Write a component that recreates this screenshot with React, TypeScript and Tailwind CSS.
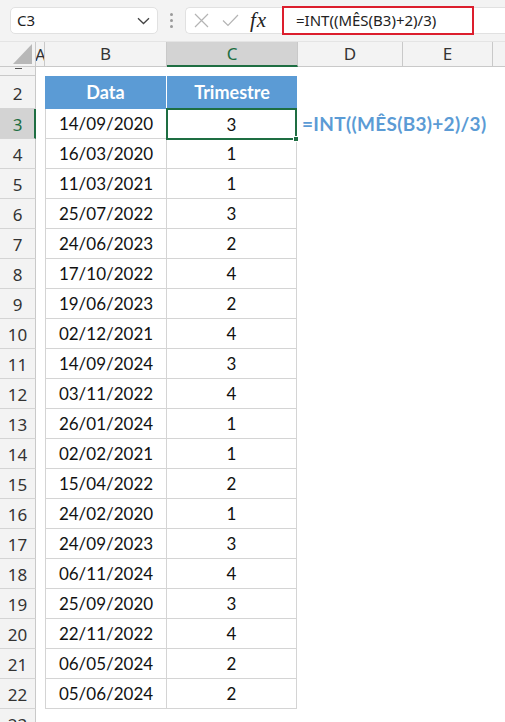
import React from "react";

const DATA: [string, number][] = [
  ["14/09/2020", 3],
  ["16/03/2020", 1],
  ["11/03/2021", 1],
  ["25/07/2022", 3],
  ["24/06/2023", 2],
  ["17/10/2022", 4],
  ["19/06/2023", 2],
  ["02/12/2021", 4],
  ["14/09/2024", 3],
  ["03/11/2022", 4],
  ["26/01/2024", 1],
  ["02/02/2021", 1],
  ["15/04/2022", 2],
  ["24/02/2020", 1],
  ["24/09/2023", 3],
  ["06/11/2024", 4],
  ["25/09/2020", 3],
  ["22/11/2022", 4],
  ["06/05/2024", 2],
  ["05/06/2024", 2],
];

const cellFont = { fontFamily: "Lato, 'Liberation Sans', sans-serif" };
const uiFont = { fontFamily: "'Noto Sans', 'Open Sans', sans-serif" };

function TopBar() {
  return (
    <div className="h-[41px] bg-[#f3f3f3] flex items-center relative" style={uiFont}>
      <div className="ml-[10px] w-[148px] h-[27px] bg-white border border-[#e1e1e1] rounded-[5px] flex items-center justify-between pl-[6px] pr-[7px]">
        <span className="text-[15px] text-[#222] leading-none">C3</span>
        <svg width="13" height="8" viewBox="0 0 13 8" fill="none">
          <path d="M1 1.2 L6.5 6.5 L12 1.2" stroke="#444" strokeWidth="1.3" />
        </svg>
      </div>
      <div className="w-[27px] flex flex-col items-center gap-[3px]">
        <span className="w-[3px] h-[3px] rounded-full bg-[#9a9a9a]" />
        <span className="w-[3px] h-[3px] rounded-full bg-[#9a9a9a]" />
        <span className="w-[3px] h-[3px] rounded-full bg-[#9a9a9a]" />
      </div>
      <div className="flex-1 h-[27px] bg-white border border-r-0 border-[#e1e1e1] rounded-l-[5px] flex items-center">
        <div className="w-[96px] flex items-center h-full">
          <svg className="ml-[8px]" width="15" height="15" viewBox="0 0 15 15" fill="none">
            <path d="M1 1 L14 14 M14 1 L1 14" stroke="#b4b4b4" strokeWidth="1.2" />
          </svg>
          <svg className="ml-[13px]" width="17" height="13" viewBox="0 0 17 13" fill="none">
            <path d="M1 6.5 L6 11.5 L16 1" stroke="#b4b4b4" strokeWidth="1.2" />
          </svg>
          <span
            className="ml-[11px] text-[21px] italic text-[#222] leading-none tracking-[1px]"
            style={{ fontFamily: "'Liberation Serif', serif" }}
          >
            fx
          </span>
        </div>
        <div className="w-[192px] h-[29px] -my-px border-2 border-[#dc1e2d] flex items-center pl-[12px]">
          <span className="text-[15px] text-[#222] leading-none whitespace-nowrap">
            =INT((MÊS(B3)+2)/3)
          </span>
        </div>
      </div>
    </div>
  );
}

function ColHeaders() {
  return (
    <div className="h-[26px] flex bg-[#f3f3f3] border-t border-[#e4e4e4]" style={uiFont}>
      <div className="w-[36px] h-full border-r border-b border-[#c9c9c9] flex items-end justify-end pr-[3px] pb-[2px]">
        <svg width="19" height="20" viewBox="0 0 19 20">
          <path d="M19 0 L19 20 L0 20 Z" fill="#b8b8b8" />
        </svg>
      </div>
      <div className="w-[9px] h-full border-r border-b border-[#c9c9c9] overflow-hidden flex items-center">
        <span className="text-[17px] text-[#333] -ml-[1px] leading-none">A</span>
      </div>
      <div className="w-[122px] h-full border-r border-b border-[#c9c9c9] flex items-center justify-center text-[17px] text-[#333]">
        B
      </div>
      <div className="w-[131px] h-full border-r border-[#c9c9c9] border-b-2 border-b-[#1e6e42] bg-[#d3d3d3] flex items-center justify-center text-[17px] text-[#1e6e42]">
        C
      </div>
      <div className="w-[105px] h-full border-r border-b border-[#c9c9c9] flex items-center justify-center text-[17px] text-[#333]">
        D
      </div>
      <div className="w-[90px] h-full border-r border-b border-[#c9c9c9] flex items-center justify-center text-[17px] text-[#333]">
        E
      </div>
      <div className="flex-1 h-full border-b border-[#c9c9c9]" />
    </div>
  );
}

function RowHead({ n, selected }: { n?: number; selected?: boolean }) {
  return (
    <div
      className={
        "w-[36px] shrink-0 h-full flex items-center justify-center pt-[3px] text-[17px] border-b border-[#d4d4d4] " +
        (selected
          ? "bg-[#d3d3d3] text-[#1e6e42] border-r-2 border-r-[#1e6e42] pl-[1px]"
          : "bg-[#f3f3f3] text-[#333] border-r border-r-[#c9c9c9]")
      }
      style={uiFont}
    >
      {n}
    </div>
  );
}

export default function App() {
  return (
    <div className="w-[505px] h-[722px] overflow-hidden bg-white">
      <TopBar />
      <ColHeaders />
      {/* row 1 (mostly hidden) */}
      <div className="h-[9px] flex">
        <div className="w-[36px] h-full bg-[#f3f3f3] border-r border-b border-[#c9c9c9] relative">
          <span className="absolute left-[15px] top-[1px] w-[7px] h-[1px] bg-[#555]" />
        </div>
      </div>
      {/* row 2 header */}
      <div className="h-[33px] flex">
        <RowHead n={2} />
        <div className="w-[9px]" />
        <div
          className="w-[122px] h-full bg-[#5b9bd5] border-r border-white flex items-center justify-center text-[18px] font-bold text-white"
          style={cellFont}
        >
          Data
        </div>
        <div
          className="w-[130px] h-full bg-[#5b9bd5] flex items-center justify-center text-[18px] font-bold text-white"
          style={cellFont}
        >
          Trimestre
        </div>
      </div>
      {DATA.map(([d, q], i) => {
        const sel = i === 0;
        return (
          <div key={i} className="h-[30px] flex">
            <RowHead n={i + 3} selected={sel} />
            <div className="w-[9px]" />
            <div
              className="w-[122px] h-full border-l border-r border-b border-[#d4d4d4] flex items-center justify-center pt-[1px] text-[17px] text-[#111]"
              style={cellFont}
            >
              {d}
            </div>
            {sel ? (
              <div
                className="relative w-[131px] -ml-px h-[32px] -mt-px border-2 border-[#1e6e42] flex items-center justify-center pt-[1px] text-[17px] text-[#111]"
                style={cellFont}
              >
                {q}
                <span className="absolute -right-[4px] -bottom-[4px] w-[6px] h-[6px] bg-[#1e6e42] border border-white" />
              </div>
            ) : (
              <div
                className="w-[130px] h-full border-r border-b border-[#d4d4d4] flex items-center justify-center pt-[1px] text-[17px] text-[#111]"
                style={cellFont}
              >
                {q}
              </div>
            )}
            {sel && (
              <div
                className="pl-[5px] flex items-center whitespace-nowrap text-[19px] tracking-[0.3px] font-bold text-[#5b9bd5]"
                style={cellFont}
              >
                =INT((MÊS(B3)+2)/3)
              </div>
            )}
          </div>
        );
      })}
      <div className="h-[30px] flex">
        <RowHead n={23} />
      </div>
    </div>
  );
}
